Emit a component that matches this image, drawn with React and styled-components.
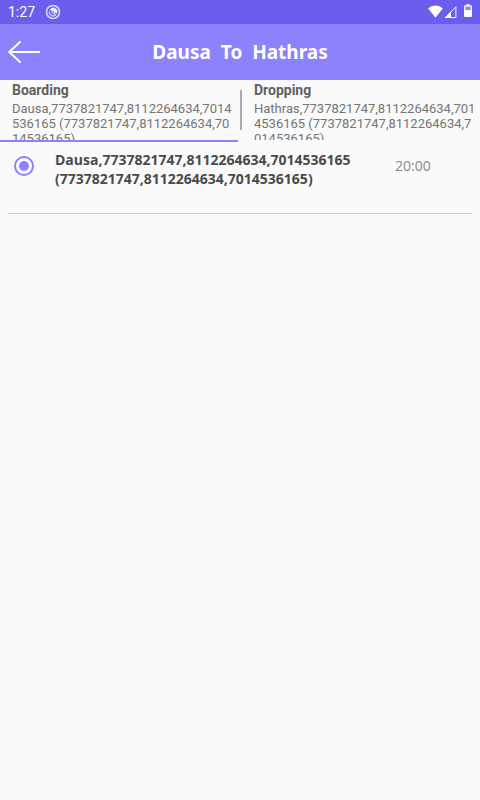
import { useState } from 'react';
import styled, { createGlobalStyle, ThemeProvider } from 'styled-components';

const theme = {
  colors: {
    primary: '#8c82fc',
    primaryDark: '#6c5eed',
    background: '#fafafa',
    white: '#ffffff',
    text: '#4a4a4a',
    muted: '#757575',
    time: '#888888',
    heading: '#616161',
    divider: '#aaaaaa',
    line: '#cccccc',
  },
};

const GlobalStyle = createGlobalStyle`
  * {
    box-sizing: border-box;
  }

  body {
    margin: 0;
    background-color: ${({ theme }) => theme.colors.background};
    font-family: Roboto, sans-serif;
  }
`;

const StatusBar = styled.div`
  display: flex;
  align-items: center;
  justify-content: space-between;
  height: 24px;
  padding: 0 8px;
  background-color: ${({ theme }) => theme.colors.primaryDark};
  color: ${({ theme }) => theme.colors.white};
  font-size: 14px;
  line-height: 24px;
`;

const StatusGroup = styled.div`
  display: flex;
  align-items: center;
  gap: ${({ $gap }) => $gap}px;

  svg {
    display: block;
  }
`;

const Header = styled.header`
  display: grid;
  grid-template-columns: 48px 1fr 48px;
  align-items: center;
  height: 56px;
  background-color: ${({ theme }) => theme.colors.primary};
`;

const BackButton = styled.button`
  display: flex;
  align-items: center;
  justify-content: center;
  height: 48px;
  padding: 0;
  border: 0;
  background: none;
  cursor: pointer;
`;

const Title = styled.h1`
  margin: 0;
  color: ${({ theme }) => theme.colors.white};
  font-family: 'Noto Sans', sans-serif;
  font-size: 19px;
  font-weight: 700;
  line-height: 24px;
  text-align: center;
  white-space: pre;
`;

const Tabs = styled.div`
  display: grid;
  grid-template-columns: 1fr 4px 1fr;
`;

const Tab = styled.button`
  display: block;
  min-width: 0;
  padding: 1px 3px 0 12px;
  border: 0;
  border-bottom: 2px solid
    ${({ theme, $active }) => ($active ? theme.colors.primary : 'transparent')};
  background: none;
  font-family: inherit;
  text-align: left;
  cursor: pointer;
`;

const TabLabel = styled.span`
  display: block;
  color: ${({ theme }) => theme.colors.heading};
  font-size: 14px;
  font-weight: 700;
  line-height: 18px;
`;

const TabPlace = styled.span`
  display: block;
  height: 41px;
  padding-top: 2px;
  overflow: hidden;
  color: ${({ theme }) => theme.colors.muted};
  font-size: 13px;
  line-height: 15px;
  word-break: break-all;
`;

const Divider = styled.div`
  justify-self: end;
  width: 2px;
  height: 40px;
  margin-top: 10px;
  background-color: ${({ theme }) => theme.colors.divider};
`;

const List = styled.div`
  padding: 0 8px;
`;

const Item = styled.label`
  display: grid;
  grid-template-columns: 47px 1fr 77px;
  align-items: start;
  min-height: 72px;
  padding-top: 8px;
  border-bottom: 1px solid ${({ theme }) => theme.colors.line};
  font-family: 'Open Sans', sans-serif;
  font-size: 14px;
  line-height: 19px;
  cursor: pointer;
`;

const Radio = styled.input`
  appearance: none;
  width: 20px;
  height: 20px;
  margin: 6px;
  border: 2px solid ${({ theme }) => theme.colors.primary};
  border-radius: 50%;

  &:checked {
    padding: 3px;
    background-color: ${({ theme }) => theme.colors.primary};
    background-clip: content-box;
  }
`;

const PointName = styled.span`
  color: ${({ theme }) => theme.colors.text};
  font-weight: 700;
  white-space: pre-line;
`;

const PointTime = styled.time`
  padding-top: 6px;
  color: ${({ theme }) => theme.colors.time};
`;

const tabs = [
  {
    id: 'boarding',
    label: 'Boarding',
    place: 'Dausa,7737821747,8112264634,7014536165 (7737821747,8112264634,7014536165)',
    name: 'Dausa,7737821747,8112264634,7014536165\n(7737821747,8112264634,7014536165)',
    time: '20:00',
  },
  {
    id: 'dropping',
    label: 'Dropping',
    place: 'Hathras,7737821747,8112264634,7014536165 (7737821747,8112264634,7014536165)',
    name: 'Hathras,7737821747,8112264634,7014536165\n(7737821747,8112264634,7014536165)',
    time: '20:00',
  },
];

const SyncIcon = () => (
  <svg width="16" height="16" viewBox="0 0 16 16" fill="none" stroke="#fff" aria-hidden="true">
    <circle cx="8" cy="8" r="6.5" strokeWidth="1.6" opacity="0.75" />
    <path d="M4.300 7.500A3.800 3.800 0 0 0 9.800 11.400" strokeWidth="1.4" opacity="0.65" />
    <path d="M5 5.400A4 4 0 0 1 11.900 9.400L9.800 8.900 8.300 6.900 6.500 7z" fill="#fff" stroke="none" opacity="0.9" />
    <path d="M6.500 7.500l4.500 4" strokeWidth="1.2" opacity="0.7" />
  </svg>
);

const WifiIcon = () => (
  <svg width="16" height="14" viewBox="0 0 16 14" fill="#fff" aria-hidden="true">
    <path d="M7.500 12.800L.2 3.400C2.200 1.700 4.700.6 7.500.6s5.300 1.100 7.300 2.800z" />
  </svg>
);

const SignalIcon = () => (
  <svg width="13" height="14" viewBox="0 0 13 14" aria-hidden="true">
    <path d="M1.600 12.500L11.900 1.800v10.700z" fill="none" stroke="#fff" opacity="0.9" />
    <path d="M.4 13L7 6.200V13z" fill="#fff" />
  </svg>
);

const BatteryIcon = () => (
  <svg width="8" height="16" viewBox="0 0 8 16" fill="#fff" aria-hidden="true">
    <path d="M2.500 0h3v1.300H7q1 0 1 1V6H0V2.300q0-1 1-1h1.500z" opacity="0.9" />
    <path d="M1.300 2.700h5.400V6H1.300z" fill="#6c5eed" opacity="0.7" />
    <path d="M0 6h8v6q0 1-1 1H1q-1 0-1-1z" />
  </svg>
);

const BackIcon = () => (
  <svg width="32" height="24" viewBox="0 0 32 24" fill="none" stroke="#fff" strokeWidth="2" strokeLinecap="round" strokeLinejoin="round" aria-hidden="true">
    <path d="M31.500 12H1.200M12 2L1.200 12 12 22" />
  </svg>
);

const App = () => {
  const [activeId, setActiveId] = useState('boarding');
  const active = tabs.find((tab) => tab.id === activeId);

  const renderTab = (tab) => (
    <Tab
      type="button"
      role="tab"
      aria-selected={tab.id === activeId}
      $active={tab.id === activeId}
      onClick={() => setActiveId(tab.id)}
    >
      <TabLabel>{tab.label}</TabLabel>
      <TabPlace>{tab.place}</TabPlace>
    </Tab>
  );

  return (
    <ThemeProvider theme={theme}>
      <GlobalStyle />
      <StatusBar>
        <StatusGroup $gap={10}>
          <span>1:27</span>
          <SyncIcon />
        </StatusGroup>
        <StatusGroup $gap={7}>
          <StatusGroup $gap={0}>
            <WifiIcon />
            <SignalIcon />
          </StatusGroup>
          <BatteryIcon />
        </StatusGroup>
      </StatusBar>
      <Header>
        <BackButton type="button" aria-label="Back">
          <BackIcon />
        </BackButton>
        <Title>{'Dausa  To  Hathras'}</Title>
      </Header>
      <Tabs role="tablist">
        {renderTab(tabs[0])}
        <Divider />
        {renderTab(tabs[1])}
      </Tabs>
      <List>
        <Item>
          <Radio type="radio" name="point" value={active.id} defaultChecked />
          <PointName>{active.name}</PointName>
          <PointTime>{active.time}</PointTime>
        </Item>
      </List>
    </ThemeProvider>
  );
};

export default App;
